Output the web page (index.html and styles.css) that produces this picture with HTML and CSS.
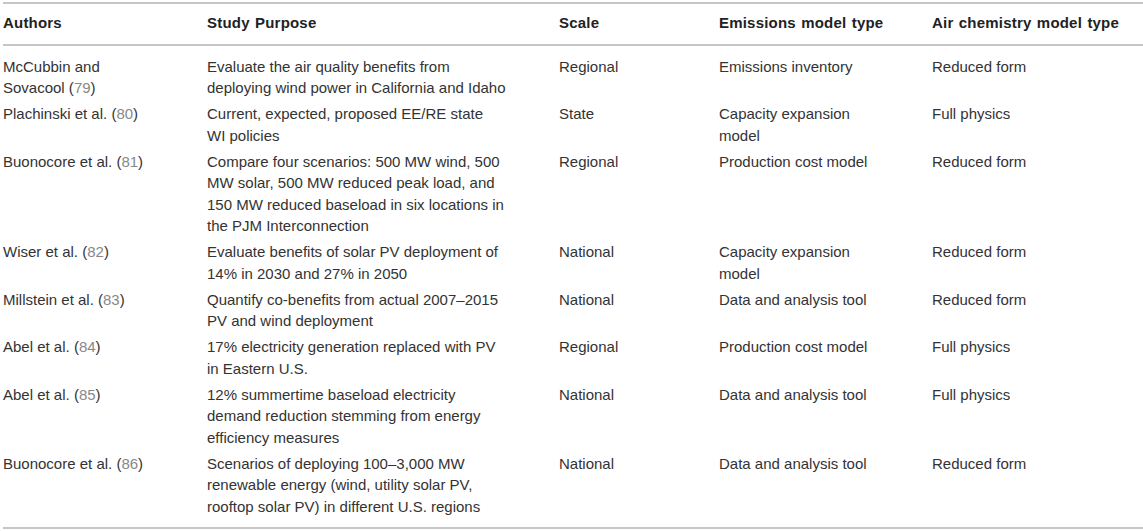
FILE: index.html
```html
<!DOCTYPE html>
<html lang="en">
<head>
    <meta charset="UTF-8">
    <meta name="viewport" content="width=device-width, initial-scale=1.0">
    <title>Air quality co-benefit studies</title>
    <link rel="stylesheet" href="styles.css">
</head>
<body>
    <table class="study-table">
        <colgroup>
            <col class="col-authors">
            <col class="col-purpose">
            <col class="col-scale">
            <col class="col-emissions">
            <col class="col-chemistry">
        </colgroup>
        <thead>
            <tr>
                <th>Authors</th>
                <th>Study Purpose</th>
                <th>Scale</th>
                <th>Emissions model type</th>
                <th>Air chemistry model type</th>
            </tr>
        </thead>
        <tbody>
            <tr>
                <td class="authors">McCubbin and Sovacool (<span class="ref">79</span>)</td>
                <td class="purpose">Evaluate the air quality benefits from deploying wind power in California and Idaho</td>
                <td>Regional</td>
                <td class="emissions">Emissions inventory</td>
                <td>Reduced form</td>
            </tr>
            <tr>
                <td class="authors">Plachinski et al. (<span class="ref">80</span>)</td>
                <td class="purpose">Current, expected, proposed EE/RE state WI&nbsp;policies</td>
                <td>State</td>
                <td class="emissions">Capacity expansion model</td>
                <td>Full physics</td>
            </tr>
            <tr>
                <td class="authors">Buonocore et al. (<span class="ref">81</span>)</td>
                <td class="purpose">Compare four scenarios: 500 MW wind, 500 MW solar, 500 MW reduced peak load, and 150 MW reduced baseload in six locations in the PJM Interconnection</td>
                <td>Regional</td>
                <td class="emissions">Production cost model</td>
                <td>Reduced form</td>
            </tr>
            <tr>
                <td class="authors">Wiser et al. (<span class="ref">82</span>)</td>
                <td class="purpose">Evaluate benefits of solar PV deployment of 14% in 2030 and 27% in 2050</td>
                <td>National</td>
                <td class="emissions">Capacity expansion model</td>
                <td>Reduced form</td>
            </tr>
            <tr>
                <td class="authors">Millstein et al. (<span class="ref">83</span>)</td>
                <td class="purpose">Quantify co-benefits from actual 2007–2015 PV and wind deployment</td>
                <td>National</td>
                <td class="emissions">Data and analysis tool</td>
                <td>Reduced form</td>
            </tr>
            <tr>
                <td class="authors">Abel et al. (<span class="ref">84</span>)</td>
                <td class="purpose">17% electricity generation replaced with PV in Eastern U.S.</td>
                <td>Regional</td>
                <td class="emissions">Production cost model</td>
                <td>Full physics</td>
            </tr>
            <tr>
                <td class="authors">Abel et al. (<span class="ref">85</span>)</td>
                <td class="purpose">12% summertime baseload electricity demand reduction stemming from energy efficiency measures</td>
                <td>National</td>
                <td class="emissions">Data and analysis tool</td>
                <td>Full physics</td>
            </tr>
            <tr>
                <td class="authors">Buonocore et al. (<span class="ref">86</span>)</td>
                <td class="purpose">Scenarios of deploying 100–3,000 MW renewable energy (wind, utility solar PV, rooftop solar PV) in different U.S. regions</td>
                <td>National</td>
                <td class="emissions">Data and analysis tool</td>
                <td>Reduced form</td>
            </tr>
        </tbody>
    </table>
</body>
</html>
```

FILE: styles.css
```css
body {
    margin: 0;
    padding: 2px 0 0 3px;
    background: #fff;
    font-family: "Liberation Sans", Arial, sans-serif;
    font-size: 15px;
    color: #333;
}
.study-table {
    width: 1140px;
    border-collapse: collapse;
    table-layout: fixed;
    line-height: 21.5px;
}
.col-authors { width: 204px; }
.col-purpose { width: 352px; }
.col-scale { width: 160px; }
.col-emissions { width: 213px; }
.col-chemistry { width: 211px; }
thead tr {
    border-top: 2px solid #c6c6c6;
    border-bottom: 2px solid #c6c6c6;
}
tbody tr:last-child {
    border-bottom: 2px solid #c6c6c6;
}
th {
    text-align: left;
    font-weight: bold;
    color: #222;
    letter-spacing: 0.2px;
    word-spacing: 1px;
    padding: 8px 0 10px;
}
td {
    text-align: left;
    vertical-align: top;
    padding: 2px 0 2.5px;
}
tbody tr:first-child td {
    padding-top: 10px;
}
tbody tr:last-child td {
    padding-bottom: 10px;
}
td.authors { padding-right: 54px; }
td.purpose { padding-right: 52px; }
td.emissions { padding-right: 53px; }
.ref {
    color: #888;
}
```
